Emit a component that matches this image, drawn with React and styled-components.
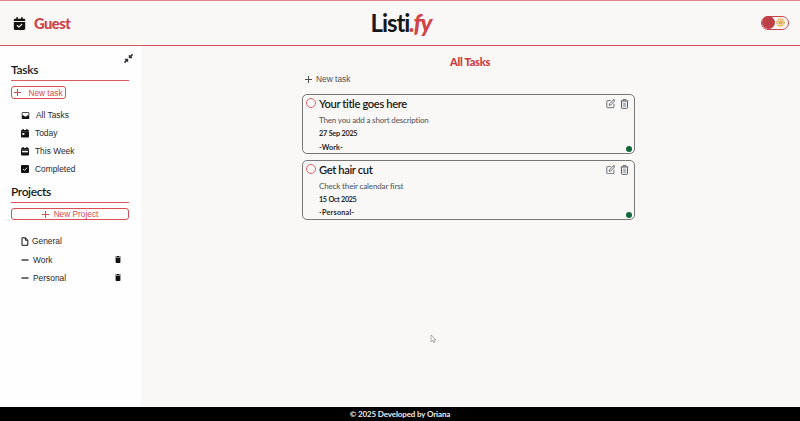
import React from "react";
import styled, { createGlobalStyle } from "styled-components";
import { FaCalendarCheck, FaDownLeftAndUpRightToCenter } from "react-icons/fa6";
import { FiEdit } from "react-icons/fi";
import { BiSolidInbox } from "react-icons/bi";

const GlobalStyle = createGlobalStyle`
  * { box-sizing: border-box; }
  body { margin: 0; background: #faf8f7; color: #181818; font-family: Lato, sans-serif; }
  h1, h2, h3, p, ul { margin: 0; padding: 0; }
  button { padding: 0; margin: 0; background: none; border: 0; font-family: "Liberation Sans", sans-serif; }
  svg { display: block; flex: none; }
`;
const Page = styled.div`
  height: 421px;
  display: grid;
  grid-template: 46px 361px 14px / 141px 1fr;
  overflow: hidden;
`;
const Header = styled.header`
  grid-column: 1 / -1;
  display: grid;
  grid-template-columns: 1fr auto 1fr;
  align-items: center;
  padding: 0 11px 0 13px;
  border-top: 1px solid #e0858b;
  border-bottom: 1px solid #d4555c;
`;
const User = styled.div`
  display: flex;
  align-items: center;
  gap: 8px;
  color: #cc4248;
  font-size: 14.7px;
  font-weight: 900;
  line-height: 20px;
  letter-spacing: -0.5px;
  svg { color: #14140f; }
`;
const Logo = styled.h1`
  font-size: 24px;
  line-height: 30px;
  font-weight: 700;
  letter-spacing: -1.1px;
  em { color: #cf4449; font-weight: 900; }
`;
const Toggle = styled.button`
  justify-self: end;
  width: 28px;
  height: 14px;
  margin-top: -1px;
  border: 1px solid #c8434a;
  border-radius: 7px;
  display: flex;
  align-items: center;
  justify-content: space-between;
  padding-right: 3px;
`;
const Knob = styled.span`
  width: 13px;
  height: 13px;
  margin-left: -0.5px;
  border-radius: 50%;
  background: #bd4047;
`;
const Sidebar = styled.aside`
  background: #fefefe;
  padding: 8px 12px 0 11px;
`;
const Collapse = styled.div`
  height: 10px;
  display: flex;
  justify-content: flex-end;
  margin-right: -4px;
`;
const Heading = styled.h2`
  height: ${(p) => p.$height}px;
  margin-top: ${(p) => p.$top || 0}px;
  font-size: 12px;
  line-height: 12px;
  font-weight: 600;
  letter-spacing: ${(p) => p.$spacing}px;
  border-bottom: 1px solid #d9595f;
`;
const AddButton = styled.button`
  display: flex;
  align-items: center;
  justify-content: center;
  gap: ${(p) => (p.$wide ? 5 : 7)}px;
  width: ${(p) => (p.$wide ? "118px" : "55px")};
  height: ${(p) => (p.$wide ? 12 : 13)}px;
  margin-top: 5px;
  border: 1px solid #dc4c53;
  border-radius: 3px;
  color: #d64950;
  font-size: 8.3px;
  line-height: 10px;
  white-space: nowrap;
`;
const List = styled.ul`
  list-style: none;
  padding: ${(p) => p.$top}px 8px 0 10px;
`;
const Item = styled.li`
  height: 18.1px;
  display: flex;
  align-items: center;
  gap: ${(p) => p.$gap}px;
  font: 8.4px/12px "Liberation Sans", sans-serif;
  color: #292929;
  svg { color: #111; }
  span + svg { margin-left: auto; }
`;
const Main = styled.main`
  padding: 9px 0 0 161px;
`;
const Board = styled.section`
  width: 333px;
  display: flex;
  flex-direction: column;
`;
const Title = styled.h2`
  align-self: center;
  padding-left: 3px;
  color: #c9393f;
  font-size: 11px;
  line-height: 14px;
  font-weight: 900;
  letter-spacing: -0.25px;
`;
const NewTask = styled.button`
  display: flex;
  align-items: center;
  gap: 4px;
  height: 12px;
  margin: 4px 0 9px 3px;
  color: #4b4e52;
  font-size: 8.4px;
`;
const Card = styled.article`
  height: 60px;
  margin-bottom: 5.5px;
  border: 1px solid #777;
  border-radius: 5px;
  display: grid;
  grid-template-columns: 16px 1fr auto;
`;
const Check = styled.span`
  width: 10px;
  height: 10px;
  margin: 3px 0 0 3px;
  border: 1px solid #dc626a;
  border-radius: 50%;
`;
const TaskTitle = styled.h3`
  font-size: 11.2px;
  line-height: 16px;
  padding-top: 1px;
  font-weight: 600;
  letter-spacing: ${(p) => p.$spacing}px;
`;
const Description = styled.p`
  margin-top: 2px;
  font-size: 8px;
  line-height: 13px;
  font-weight: 500;
  color: #555b64;
  letter-spacing: ${(p) => p.$spacing}px;
`;
const Meta = styled.p`
  font-size: 7.3px;
  line-height: 13.5px;
  font-weight: 700;
  color: #282828;
  letter-spacing: ${(p) => p.$spacing}px;
  word-spacing: 0.3px;
`;
const CardSide = styled.div`
  display: flex;
  flex-direction: column;
  align-items: flex-end;
  justify-content: space-between;
  padding: 4px 2px 2px 0;
`;
const Actions = styled.div`
  display: flex;
  gap: 5px;
  padding-right: 3px;
  color: #454d55;
`;
const Status = styled.span`
  width: 6px;
  height: 6px;
  border-radius: 50%;
  background: #12673c;
`;
const Footer = styled.footer`
  grid-column: 1 / -1;
  background: #000;
  color: #eee;
  text-align: center;
  font-size: 8px;
  line-height: 15px;
  font-weight: 700;
  letter-spacing: -0.13px;
`;
const Pointer = styled.svg`
  position: absolute;
  left: 430px;
  top: 334px;
`;

const Plus = () => (
  <svg width="7" height="7" viewBox="0 0 7 7" stroke="currentColor" strokeWidth="1">
    <path d="M0 3.5h7M3.5 0v7" />
  </svg>
);
const Minus = () => (
  <svg width="8" height="8" viewBox="0 0 8 8" stroke="currentColor" strokeWidth="1.2"><path d="M.5 4h7" /></svg>
);
const FileIcon = () => (
  <svg width="8" height="9" viewBox="0 0 8 9" fill="none" stroke="currentColor" strokeWidth="1" strokeLinejoin="round">
    <path d="M1 .8h3.5L6.8 3v5.3H1zM4.4 1v2.2h2.2" />
  </svg>
);
const TrashSolid = () => (
  <svg width="6" height="7" viewBox="0 0 6 7" fill="currentColor">
    <path d="M2 0h2v.5h1.7v1H.3v-1H2zM.6 2h4.8v4.3q0 .7-.7.7H1.3q-.7 0-.7-.7z" />
  </svg>
);
const TrashOutline = () => (
  <svg width="9" height="10" viewBox="0 0 9 10" fill="none" stroke="currentColor" strokeWidth=".9">
    <path d="M.7 2h7.6M3 1.8V.7h3v1.1M1.5 2.2v6.3q0 .8.8.8h4.4q.8 0 .8-.8V2.2" />
    <path d="M3.3 3.6v4.2M4.5 3.6v4.2M5.7 3.6v4.2" stroke="#71808c" strokeWidth=".6" />
  </svg>
);
const Day = ({ week }) => (
  <svg width="8" height="9" viewBox="0 0 8 9">
    <path d="M1.5 0h1.3v1h2.4V0h1.3v1H7q1 0 1 1v5.5q0 1-1 1H1q-1 0-1-1V2q0-1 1-1h.5z" fill="currentColor" />
    <path d={week ? "M1 3.8h6v1.6H1z" : "M1.4 4h2v2h-2z"} fill="#eee" />
    <path d="M0 2.7h8" stroke="#888" strokeWidth=".4" />
  </svg>
);
const Done = () => (
  <svg width="8" height="8" viewBox="0 0 8 8">
    <rect width="8" height="8" rx="1" fill="currentColor" />
    <path d="M2 4l1.5 1.4L6.1 2.7" fill="none" stroke="#fff" strokeWidth=".9" />
  </svg>
);
const Sun = () => (
  <svg width="9" height="9" viewBox="0 0 9 9" fill="none" stroke="#e2a13c">
    <circle cx="4.5" cy="4.5" r="3.6" strokeWidth="1.3" strokeDasharray="1.7 .56" />
    <circle cx="4.5" cy="4.5" r="1.8" fill="#e9b45d" />
  </svg>
);

const tasks = [
  { title: "Your title goes here", text: "Then you add a short description", date: "27 Sep 2025", project: "-Work-", ls: [-0.38, -0.18, -0.3, 0.1] },
  { title: "Get hair cut", text: "Check their calendar first", date: "15 Oct 2025", project: "-Personal-", ls: [-0.38, -0.15, -0.38, 0.2] },
];

export default function App() {
  return (
    <Page>
      <GlobalStyle />
      <Header>
        <User><FaCalendarCheck size={13} /><span>Guest</span></User>
        <Logo>Listi<em>.fy</em></Logo>
        <Toggle aria-label="Toggle theme"><Knob /><Sun /></Toggle>
      </Header>
      <Sidebar>
        <Collapse><FaDownLeftAndUpRightToCenter size={9} color="#292f36" /></Collapse>
        <Heading $height={17} $spacing={-0.3}>Tasks</Heading>
        <AddButton><Plus /><span>New task</span></AddButton>
        <List $top={7}>
          <Item $gap={6}><BiSolidInbox size={9} />All Tasks</Item>
          <Item $gap={6}><Day />Today</Item>
          <Item $gap={6}><Day week />This Week</Item>
          <Item $gap={6}><Done />Completed</Item>
        </List>
        <Heading $height={17} $top={8} $spacing={-0.4}>Projects</Heading>
        <AddButton $wide><Plus /><span>New Project</span></AddButton>
        <List $top={12}>
          <Item $gap={3}><FileIcon /><span>General</span></Item>
          <Item $gap={4}><Minus /><span>Work</span><TrashSolid /></Item>
          <Item $gap={4}><Minus /><span>Personal</span><TrashSolid /></Item>
        </List>
      </Sidebar>
      <Main>
        <Board>
          <Title>All Tasks</Title>
          <NewTask><Plus /><span>New task</span></NewTask>
          {tasks.map((t) => (
            <Card key={t.title}>
              <Check />
              <div>
                <TaskTitle $spacing={t.ls[0]}>{t.title}</TaskTitle>
                <Description $spacing={t.ls[1]}>{t.text}</Description>
                <Meta $spacing={t.ls[2]}>{t.date}</Meta>
                <Meta $spacing={t.ls[3]}>{t.project}</Meta>
              </div>
              <CardSide>
                <Actions><FiEdit size={9.5} /><TrashOutline /></Actions>
                <Status />
              </CardSide>
            </Card>
          ))}
        </Board>
      </Main>
      <Footer>© 2025 Developed by Oriana</Footer>
      <Pointer width="7" height="10" viewBox="0 0 7 10" fill="#fafafa" stroke="#999" strokeWidth=".8">
        <path d="M1 .8v7l1.6-1.4 1 2.3 1.2-.5-1-2.2H6z" />
      </Pointer>
    </Page>
  );
}
